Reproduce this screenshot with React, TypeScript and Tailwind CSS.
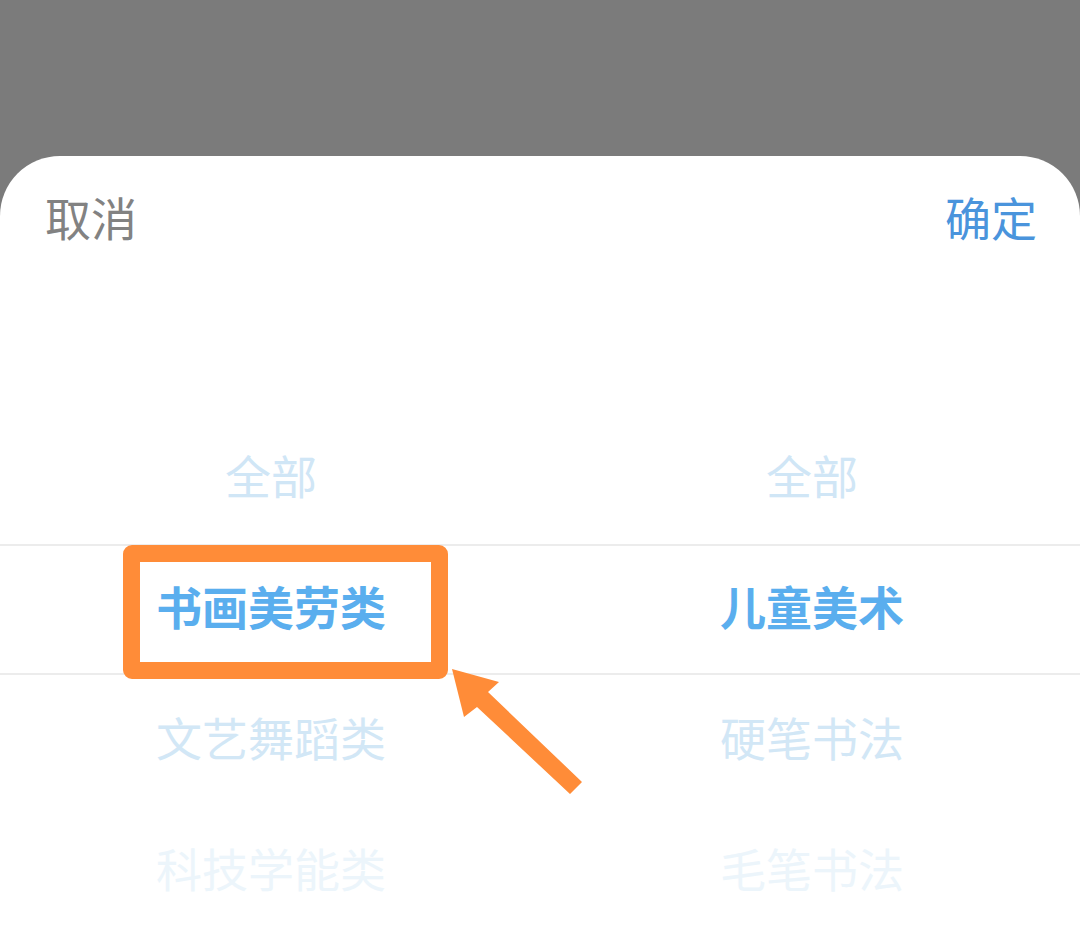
const rows: { left: string; right: string; tone: string }[] = [
  { left: "", right: "", tone: "" },
  { left: "全部", right: "全部", tone: "text-[#d0e6f6]" },
  { left: "书画美劳类", right: "儿童美术", tone: "text-[#5aaeee] font-bold" },
  { left: "文艺舞蹈类", right: "硬笔书法", tone: "text-[#d2e7f6]" },
  { left: "科技学能类", right: "毛笔书法", tone: "text-[#ecf5fb]" },
];

export default function App() {
  return (
    <div
      className="relative h-[936px] w-[1080px] overflow-hidden bg-[#7b7b7b]"
      style={{ fontFamily: '"Noto Sans CJK SC", "Noto Sans", sans-serif' }}
    >
      <div className="absolute inset-x-0 top-[156px] bottom-0 rounded-t-[60px] bg-white">
        {/* header */}
        <div className="flex h-[126px] items-center justify-between pb-[6px] pl-[45px] pr-[43px] text-[46px] leading-none">
          <span className="text-[#828282]">取消</span>
          <span className="text-[#4a94dc]">确定</span>
        </div>

        {/* picker */}
        <div className="flex flex-col">
          {rows.map((r, i) => (
            <div
              key={i}
              className={`grid h-[131px] grid-cols-2 items-center pb-[10px] text-[46px] leading-none ${r.tone} ${
                i === 2 ? "border-y-2 border-[#ececec]" : ""
              }`}
            >
              <span className="pl-[2px] text-center">{r.left}</span>
              <span className="pl-[4px] text-center">{r.right}</span>
            </div>
          ))}
        </div>
      </div>

      {/* annotation: highlight box */}
      <div className="absolute left-[123px] top-[545px] h-[134px] w-[325px] rounded-[9px] border-[17px] border-[#ff8c38]" />

      {/* annotation: arrow */}
      <svg className="absolute left-0 top-0" width="1080" height="936" viewBox="0 0 1080 936">
        <polygon
          points="452,669 499,682 488,692 582,782 570,794 477,707 464,717"
          fill="#ff8c38"
        />
      </svg>
    </div>
  );
}
